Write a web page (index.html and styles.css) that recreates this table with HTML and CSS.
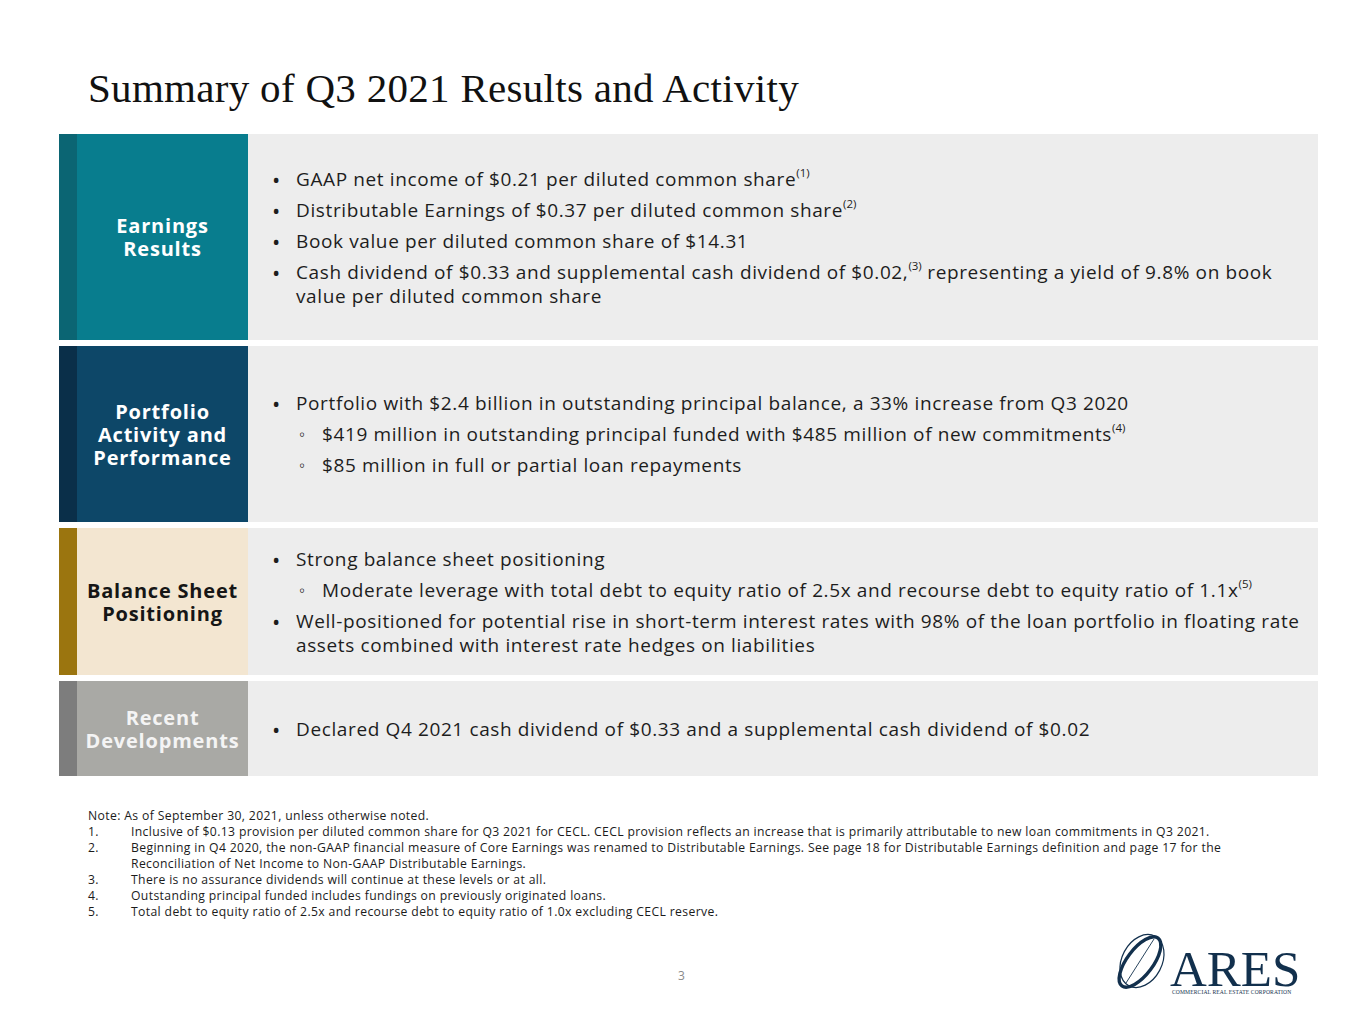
FILE: index.html
```html
<!DOCTYPE html>
<html>
<head>
<meta charset="utf-8">
<link rel="stylesheet" href="styles.css">
</head>
<body>
<div class="page">
  <h1 class="title">Summary of Q3 2021 Results and Activity</h1>
  <div class="table">
    <div class="row row-earn">
      <div class="strip"></div>
      <div class="label">Earnings<br>Results</div>
      <div class="content">
        <ul class="list">
          <li>GAAP net income of $0.21 per diluted common share<sup>(1)</sup></li>
          <li>Distributable Earnings of $0.37 per diluted common share<sup>(2)</sup></li>
          <li>Book value per diluted common share of $14.31</li>
          <li>Cash dividend of $0.33 and supplemental cash dividend of $0.02,<sup>(3)</sup> representing a yield of 9.8% on book value per diluted common share</li>
        </ul>
      </div>
    </div>
    <div class="row row-port">
      <div class="strip"></div>
      <div class="label">Portfolio<br>Activity and<br>Performance</div>
      <div class="content">
        <ul class="list">
          <li>Portfolio with $2.4 billion in outstanding principal balance, a 33% increase from Q3 2020
            <ul class="sub">
              <li>$419 million in outstanding principal funded with $485 million of new commitments<sup>(4)</sup></li>
              <li>$85 million in full or partial loan repayments</li>
            </ul>
          </li>
        </ul>
      </div>
    </div>
    <div class="row row-bal">
      <div class="strip"></div>
      <div class="label">Balance Sheet<br>Positioning</div>
      <div class="content">
        <ul class="list">
          <li>Strong balance sheet positioning
            <ul class="sub">
              <li>Moderate leverage with total debt to equity ratio of 2.5x and recourse debt to equity ratio of 1.1x<sup>(5)</sup></li>
            </ul>
          </li>
          <li>Well-positioned for potential rise in short-term interest rates with 98% of the loan portfolio in floating rate assets combined with interest rate hedges on liabilities</li>
        </ul>
      </div>
    </div>
    <div class="row row-rec">
      <div class="strip"></div>
      <div class="label">Recent<br>Developments</div>
      <div class="content">
        <ul class="list">
          <li>Declared Q4 2021 cash dividend of $0.33 and a supplemental cash dividend of $0.02</li>
        </ul>
      </div>
    </div>
  </div>
  <div class="notes">
    <p class="note-head">Note: As of September 30, 2021, unless otherwise noted.</p>
    <ol class="note-list">
      <li><span class="num">1.</span><span>Inclusive of $0.13 provision per diluted common share for Q3 2021 for CECL. CECL provision reflects an increase that is primarily attributable to new loan commitments in Q3 2021.</span></li>
      <li><span class="num">2.</span><span>Beginning in Q4 2020, the non-GAAP financial measure of Core Earnings was renamed to Distributable Earnings. See page 18 for Distributable Earnings definition and page 17 for the Reconciliation of Net Income to Non-GAAP Distributable Earnings.</span></li>
      <li><span class="num">3.</span><span>There is no assurance dividends will continue at these levels or at all.</span></li>
      <li><span class="num">4.</span><span>Outstanding principal funded includes fundings on previously originated loans.</span></li>
      <li><span class="num">5.</span><span>Total debt to equity ratio of 2.5x and recourse debt to equity ratio of 1.0x excluding CECL reserve.</span></li>
    </ol>
  </div>
  <div class="footer">
    <div class="pagenum">3</div>
    <div class="logo">
      <svg width="200" height="76" viewBox="0 0 200 76" xmlns="http://www.w3.org/2000/svg">
        <g fill="none" stroke="#12304d">
          <ellipse cx="28" cy="37" rx="13" ry="30" transform="rotate(37 28 37)" stroke-width="3.4"/>
          <ellipse cx="30" cy="36" rx="20" ry="28" transform="rotate(28 30 36)" stroke-width="1.2"/>
          <line x1="14" y1="58" x2="42" y2="14" stroke-width="0.9"/>
        </g>
        <text x="58" y="61" font-family="Liberation Serif, serif" font-size="51" fill="#12304d">ARES</text>
        <text x="60" y="69" font-family="Liberation Serif, serif" font-size="5.6" letter-spacing="0.12" fill="#12304d">COMMERCIAL REAL ESTATE CORPORATION</text>
      </svg>
    </div>
  </div>
</div>
</body>
</html>
```
FILE: styles.css
```css
* { box-sizing: border-box; }
html, body { margin: 0; padding: 0; background: #ffffff; }
body { width: 1365px; height: 1024px; overflow: hidden; font-family: "Open Sans", "Liberation Sans", sans-serif; color: #1b1b1b; }
.page { padding: 62px 47px 0 59px; position: relative; height: 1024px; }
.title {
  margin: 0 0 0 29px;
  font-family: "Liberation Serif", serif;
  font-weight: normal;
  font-size: 41px;
  line-height: 52px;
  letter-spacing: 0.3px;
  color: #111;
  height: 72px;
}
.table { display: flex; flex-direction: column; gap: 6px; width: 1259px; }
.row { display: flex; background: #ededed; }
.row-earn { height: 206px; }
.row-port { height: 176px; }
.row-bal { height: 147px; }
.row-rec { height: 95px; }
.strip { width: 18px; flex: none; }
.label {
  width: 171px; flex: none;
  display: flex; align-items: center; justify-content: center;
  text-align: center;
  font-weight: bold; font-size: 20px; line-height: 23px;
  letter-spacing: 0.8px;
  color: #fff;
}
.row-earn .strip { background: #0b6573; }
.row-earn .label { background: #087d8e; }
.row-port .strip { background: #0a2f49; }
.row-port .label { background: #0d4768; }
.row-bal .strip { background: #9b750f; }
.row-bal .label { background: #f3e6d1; color: #161616; }
.row-rec .strip { background: #7d7d7d; }
.row-rec .label { background: #a9a9a5; color: #f4f4f4; }
.content { flex: 1; display: flex; align-items: center; padding: 0 4px 0 25px; }
.list { margin: 0; padding: 0; list-style: none; font-size: 19px; line-height: 24px; color: #1d1d1d; letter-spacing: 0.62px; }
.list > li { position: relative; padding-left: 23px; margin: 7px 0; }
.list > li::before { content: "•"; position: absolute; left: -1px; top: 0; font-size: 22px; }
.sub { margin: 0; padding: 0; list-style: none; }
.sub > li { position: relative; padding-left: 26px; margin-top: 7px; }
.sub > li::before { content: "◦"; position: absolute; left: 3px; top: 0; font-size: 17px; }
sup { font-size: 11.5px; line-height: 0; vertical-align: 9px; letter-spacing: 0; }
.notes { margin: 32px 0 0 29px; font-size: 12.2px; line-height: 16px; letter-spacing: 0.36px; color: #1b1b1b; width: 1150px; }
.note-head { margin: 0; }
.note-list { margin: 0; padding: 0; list-style: none; }
.note-list li { display: flex; }
.note-list .num { width: 43px; flex: none; }
.footer { position: absolute; left: 0; right: 0; top: 925px; height: 80px; }
.pagenum { position: absolute; left: 678px; top: 42px; font-size: 12px; color: #8a8a8a; }
.logo { position: absolute; left: 1112px; top: 0; }
```
